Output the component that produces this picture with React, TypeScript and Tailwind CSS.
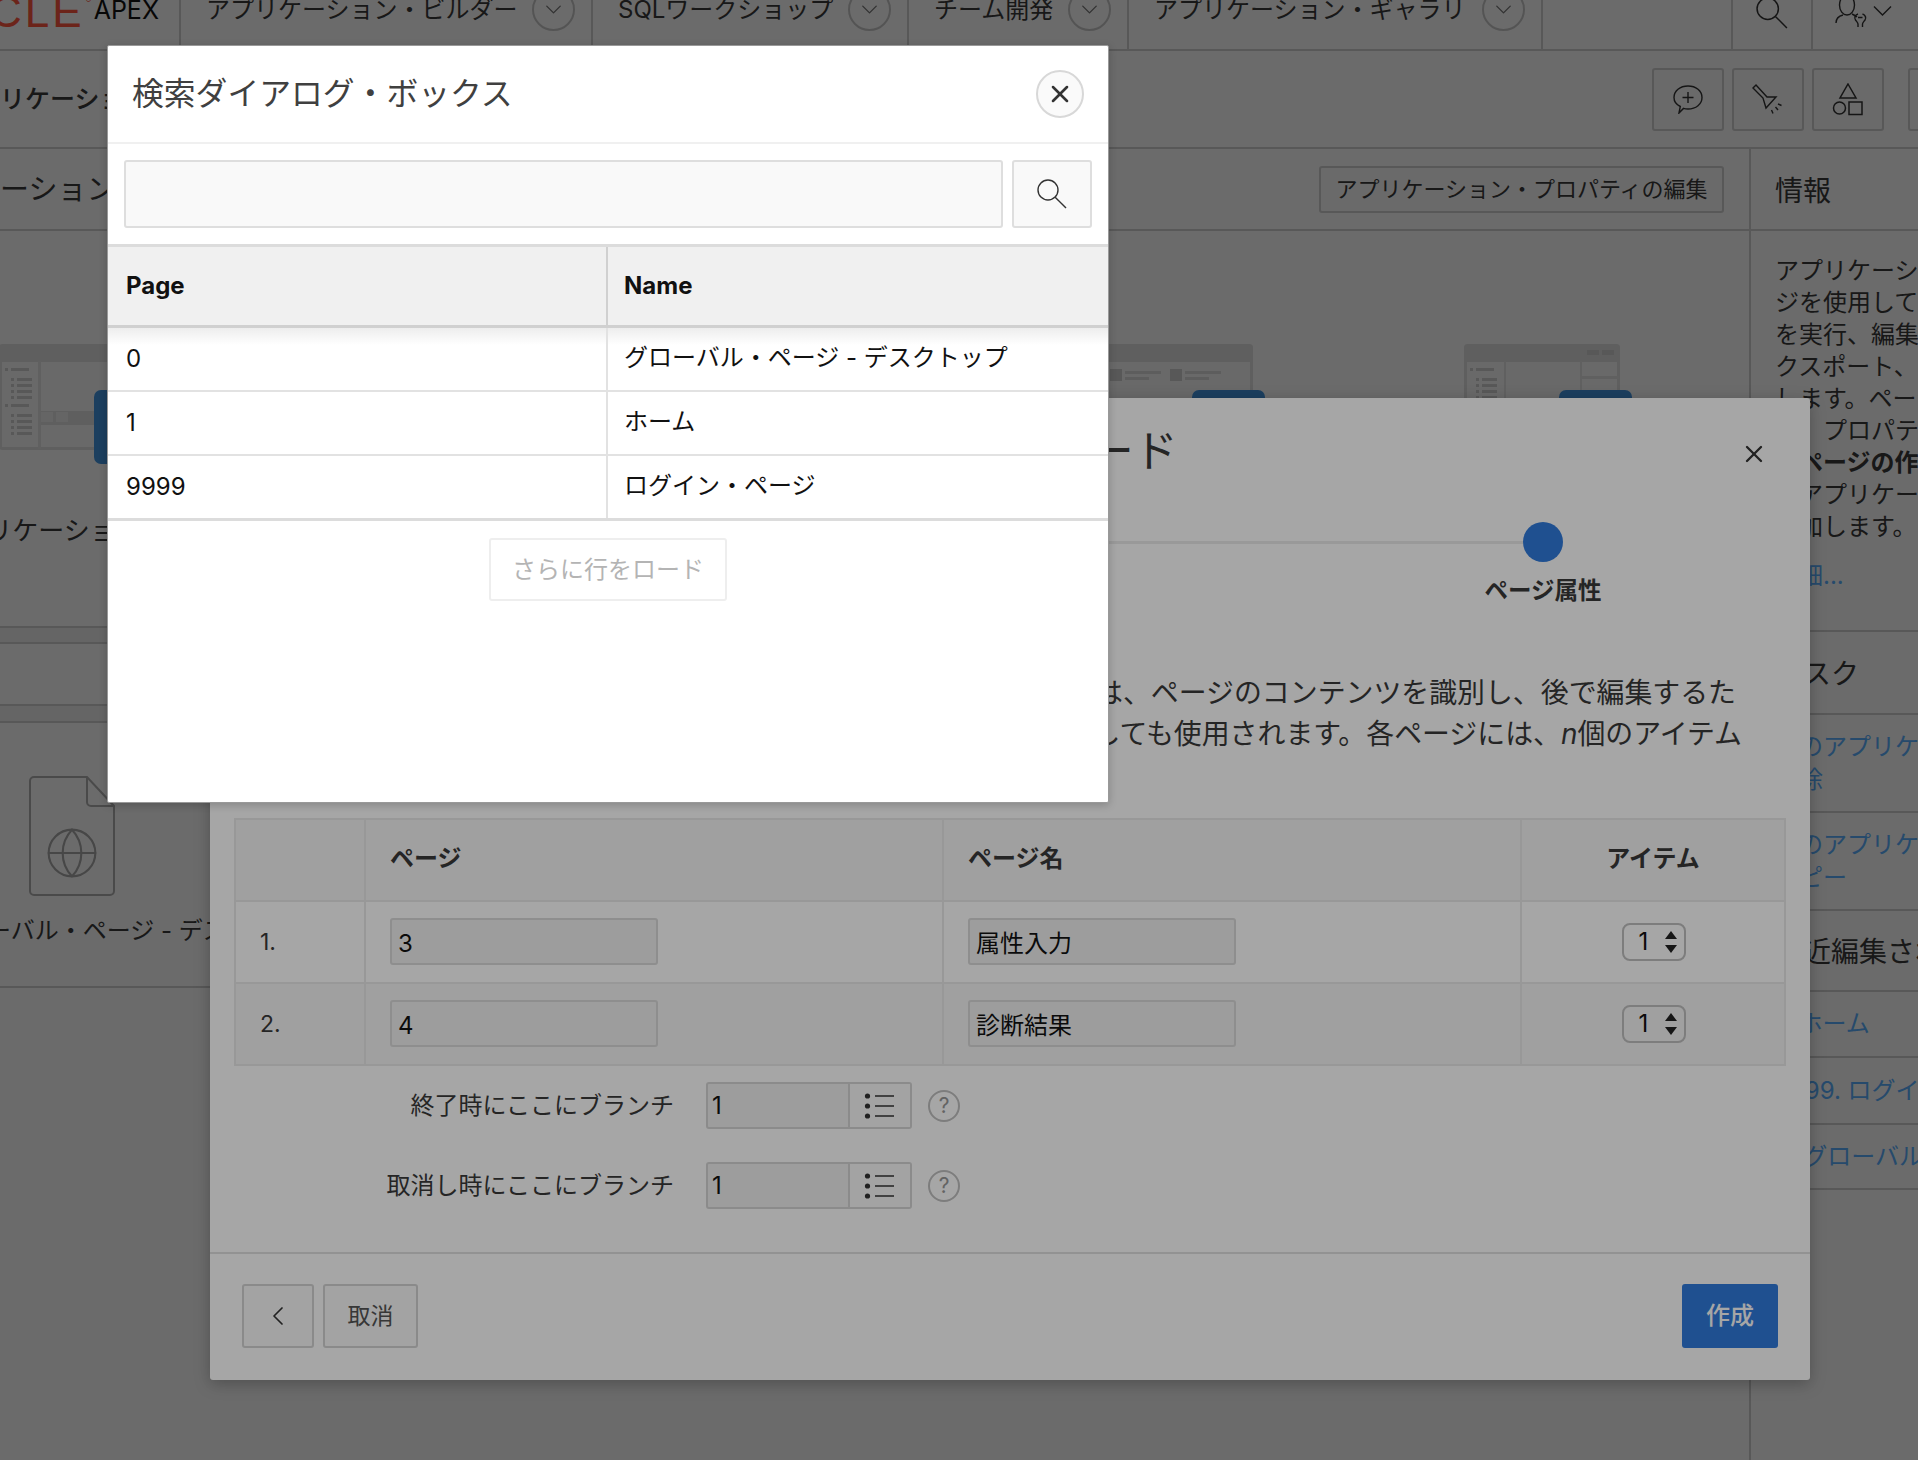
import React from "react";
import { Globe, X, ChevronDown, ChevronLeft } from "lucide-react";

function SearchIcon({ size }: { size: number }) {
  return (
    <svg width={size} height={size} viewBox="0 0 30 30" fill="none" stroke="#333" strokeWidth="1.4">
      <circle cx="11" cy="11" r="10" />
      <path d="M18.2 18.2L29 29" />
    </svg>
  );
}

// thumbnail drawn in the page cards
function Thumb({ kind }: { kind: number }) {
  const list = [34, 40, 46, 52];
  const list2 = [70, 76, 82, 88];
  return (
    <svg width="156" height="106" viewBox="0 0 156 106" fill="none">
      <rect x="1.5" y="1.5" width="153" height="103" rx="2" fill="#f8f8f8" stroke="#e0e0e0" strokeWidth="3" />
      <rect x="1" y="1" width="154" height="17" fill="#e0e0e0" />
      {kind === 0 && (
        <g fill="#d0d0d0">
          <rect x="39" y="17" width="3" height="88" fill="#e4e4e4" />
          <rect x="42" y="67" width="113" height="14" fill="#e2e2e2" />
          <rect x="42" y="68" width="12" height="10" fill="#f0f0f0" />
          <rect x="57" y="68" width="12" height="10" fill="#f0f0f0" />
          <rect x="6" y="24" width="3" height="3" />
          <rect x="12" y="24" width="18" height="3" />
          <rect x="6" y="60" width="3" height="3" />
          <rect x="12" y="60" width="18" height="3" />
          {[...list, ...list2].map((y) => (
            <g key={y}>
              <rect x="12" y={y} width="3" height="3" />
              <rect x="18" y={y} width="15" height="3" />
            </g>
          ))}
        </g>
      )}
      {kind === 1 && (
        <g fill="#dcdcdc">
          {[13, 73].map((x) => (
            <g key={x}>
              <rect x={x} y="25" width="12" height="12" fill="#cfcfcf" />
              <rect x={x + 15} y="27" width="36" height="3" />
              <rect x={x + 15} y="33" width="24" height="3" />
            </g>
          ))}
        </g>
      )}
      {kind === 2 && (
        <g fill="#d0d0d0">
          <rect x="123" y="6" width="12" height="5" />
          <rect x="138" y="6" width="12" height="5" />
          <rect x="40" y="17" width="2" height="88" fill="#e4e4e4" />
          <rect x="116" y="17" width="2" height="88" fill="#e4e4e4" />
          <rect x="118" y="32" width="37" height="3" fill="#e4e4e4" />
          <rect x="6" y="24" width="3" height="3" />
          <rect x="12" y="24" width="18" height="3" />
          {list.map((y) => (
            <g key={y}>
              <rect x="12" y={y} width="3" height="3" />
              <rect x="18" y={y} width="15" height="3" />
            </g>
          ))}
        </g>
      )}
    </svg>
  );
}

function Card({ title, kind, first }: { title: string; kind: number; first?: boolean }) {
  return (
    <div className={first ? "w-[360px] shrink-0 flex flex-col items-center" : "w-[367px] shrink-0 flex flex-col items-center"}>
      <div className="relative h-[106px] w-[156px]">
        <Thumb kind={kind} />
        <div className="absolute left-[95px] top-[46px] h-[74px] w-[73px] rounded-[7px] bg-[#4396e2]" />
      </div>
      <div className="mt-[63px] text-[26px] leading-[36px] text-[#3a3a3a] whitespace-nowrap">{title}</div>
    </div>
  );
}

function NavItem({ label, w }: { label: string; w: number }) {
  return (
    <div
      className="flex items-center justify-between border-r-2 border-[#d0d0d0] pl-[25px] pr-[16px] shrink-0"
      style={{ width: w }}
    >
      <span className="text-[24px] text-[#3a3a3a] whitespace-nowrap">{label}</span>
      <span className="flex h-[43px] w-[43px] items-center justify-center rounded-full border-2 border-[#c8c8c8]">
        <ChevronDown size={27} strokeWidth={1.2} className="text-[#777]" />
      </span>
    </div>
  );
}

function ToolButton({ children, extra }: { children?: React.ReactNode; extra?: boolean }) {
  return (
    <div
      className={
        extra
          ? "ml-[16px] flex h-[63px] w-[72px] shrink-0 items-center justify-center rounded-[3px] border-2 border-[#d0d0d0] bg-[#fafafa]"
          : "flex h-[63px] w-[72px] shrink-0 items-center justify-center rounded-[3px] border-2 border-[#d0d0d0] bg-[#fafafa]"
      }
    >
      {children}
    </div>
  );
}

function BranchRow({ label }: { label: string }) {
  return (
    <div className="flex items-center">
      <div className="w-[464px] text-right text-[24px] text-[#3a3a3a] whitespace-nowrap">{label}</div>
      <div className="ml-[32px] flex h-[47px] w-[206px] rounded-[3px] border-2 border-[#d6d6d6] bg-[#f2f2f2]">
        <div className="flex-1 pl-[4px] text-[24px] leading-[44px] text-[#111]">1</div>
        <div className="flex w-[62px] items-center justify-center border-l-2 border-[#d6d6d6] bg-[#fafafa]">
          <svg width="32" height="28" viewBox="0 0 32 28" fill="none" stroke="#333">
            <circle cx="3.5" cy="4" r="2.6" fill="#333" stroke="none" />
            <circle cx="3.5" cy="14" r="2.6" fill="#333" stroke="none" />
            <circle cx="3.5" cy="24" r="2.6" fill="#333" stroke="none" />
            <path d="M11 4h19M11 14h19M11 24h19" strokeWidth="1.6" />
          </svg>
        </div>
      </div>
      <div className="ml-[16px] flex h-[32px] w-[32px] items-center justify-center rounded-full border-2 border-[#c0c0c0] text-[21px] leading-none text-[#999]">
        ?
      </div>
    </div>
  );
}

function WizardRow({ n, page, name, even }: { n: string; page: string; name: string; even?: boolean }) {
  return (
    <tr className={even ? "h-[82px] bg-[#f6f6f6]" : "h-[82px]"}>
      <td className="border-2 border-[#eaeaea] pl-[24px] text-[23px] text-[#3a3a3a]">{n}</td>
      <td className="border-2 border-[#eaeaea] pb-[2px] pl-[24px]">
        <div className="h-[47px] w-[268px] rounded-[3px] border-2 border-[#dadada] bg-[#f2f2f2] pl-[6px] text-[24px] leading-[47px] text-[#111]">
          {page}
        </div>
      </td>
      <td className="border-2 border-[#eaeaea] pb-[2px] pl-[24px]">
        <div className="h-[47px] w-[268px] rounded-[3px] border-2 border-[#dadada] bg-[#f2f2f2] pl-[6px] text-[24px] leading-[47px] text-[#111]">
          {name}
        </div>
      </td>
      <td className="border-2 border-[#eaeaea] pb-[1px] pl-[1px]">
        <div className="mx-auto flex h-[38px] w-[64px] items-center justify-between rounded-[8px] border-2 border-[#c0c0c0] pl-[15px] pr-[6px] text-[24px] text-[#111]">
          1
          <svg width="14" height="28" viewBox="0 0 14 28" fill="#222">
            <path d="M7 3l6 8H1zM7 25l6-8H1z" />
          </svg>
        </div>
      </td>
    </tr>
  );
}

const asideLines = [
  "アプリケーション・ビルダーのページ",
  "ジを使用してアプリケーション",
  "を実行、編集、インポート、エ",
  "クスポート、コピーおよび削除",
  "します。ページの作成",
  "等、プロパティの編集",
];

const labelCls = "text-[28px] text-[#3a3a3a] whitespace-nowrap";

export default function App() {
  return (
    <div className="relative h-[1460px] w-[1918px] overflow-hidden bg-[#fdfdfd] font-['Inter','Noto_Sans_CJK_JP',sans-serif]">
      {/* Page behind the dialogs */}
      <header className="-mt-[30px] flex h-[81px] border-b-2 border-[#d0d0d0]">
        <div className="flex w-[181px] shrink-0 items-center border-r-2 border-[#d0d0d0] overflow-hidden">
          <span className="ml-[-10px] mt-[4px] text-[44px] tracking-[3px] text-[#ff563e] font-['Liberation_Sans',sans-serif]">CLE</span>
          <span className="mb-[20px] ml-[1px] text-[9px] text-[#ff563e]">®</span>
          <span className="ml-[2px] mt-[3px] text-[25px] text-[#111]">APEX</span>
        </div>
        <NavItem label="アプリケーション・ビルダー" w={412} />
        <NavItem label="SQLワークショップ" w={316} />
        <NavItem label="チーム開発" w={220} />
        <NavItem label="アプリケーション・ギャラリ" w={414} />
        <div className="w-[190px] shrink-0 border-r-2 border-[#d0d0d0]" />
        <div className="w-[80px] shrink-0 border-r-2 border-[#d0d0d0] flex items-center justify-center pt-[7px]">
          <SearchIcon size={32} />
        </div>
        <div className="flex flex-1 items-center pl-[21px]">
          <svg width="70" height="34" viewBox="0 0 70 34" fill="none" stroke="#333" strokeWidth="1.4">
            <ellipse cx="13" cy="12" rx="7.5" ry="10" />
            <path d="M2 30c0-5 3-7 7-8M18 21c2 1 4 2 5 3" />
            <path d="M24 21c-3 1-4 4-2.500 6s2.500 3 2.500 4v3M28.500 21c3 1 4 4 2.500 6s-2.500 3-2.500 4v3M24 24.500h4.500" />
            <path d="M40 13.500l8.500 8.500 8.500-8.500" />
          </svg>
        </div>
      </header>

      <div className="flex h-[98px] items-center justify-between border-b-2 border-[#d0d0d0]">
        <div className="ml-[-50px] mt-[2px] text-[25px] font-medium text-[#3a3a3a] whitespace-nowrap">アプリケーション 100</div>
        <div className="flex gap-[8px] mr-[-62px]">
          <ToolButton>
            <svg width="30" height="29" viewBox="0 0 30 29" fill="none" stroke="#333" strokeWidth="1.4">
              <path d="M6 28l1.300-6.500C3 19.500 1 16.500 1 12.500 1 6 7 1 15 1s14 5 14 11.500S23 24 15 24c-1.500 0-3-.2-4.500-.6L6 28z" />
              <path d="M15 7v11M9.500 12.500h11" />
            </svg>
          </ToolButton>
          <ToolButton>
            <svg width="32" height="31" viewBox="0 0 32 31" fill="none" stroke="#333" strokeWidth="1.4">
              <path d="M1 4l3-3 11 12h9L14 24l-3-10L1 4z" />
              <path d="M19.500 26l1.500 3.500M23.500 23l2.500 3M26 20l3.500 1.500" />
            </svg>
          </ToolButton>
          <ToolButton>
            <svg width="32" height="33" viewBox="0 0 32 33" fill="none" stroke="#333" strokeWidth="1.500">
              <path d="M16 1l8 14H8z" />
              <circle cx="7.500" cy="25" r="6" />
              <rect x="17" y="19" width="13" height="12.500" />
            </svg>
          </ToolButton>
          <ToolButton extra />
        </div>
      </div>

      <div className="flex">
        <main className="w-[1749px] shrink-0">
          <div className="flex h-[82px] items-center justify-between border-b-2 border-[#d0d0d0] pr-[25px]">
            <div className="ml-[-116px] mt-[1px] text-[29px] text-[#3a3a3a] whitespace-nowrap">アプリケーション</div>
            <div className="flex h-[47px] w-[405px] items-center justify-center rounded-[3px] border-2 border-[#d0d0d0] bg-[#fafafa] text-[22px] text-[#3a3a3a] whitespace-nowrap">
              アプリケーション・プロパティの編集
            </div>
          </div>
          <div className="-ml-[103px] flex h-[395px] pt-[113px]">
            <Card title="アプリケーションの実行" kind={0} first />
            <Card title="ページの作成" kind={0} />
            <Card title="コピー" kind={0} />
            <Card title="インポート" kind={1} />
            <Card title="エクスポート" kind={2} />
          </div>
          <div className="h-[18px] border-y-2 border-[#d0d0d0] bg-[#f0f0f0]" />
          <div className="h-[60px]" />
          <div className="h-[19px] border-y-2 border-[#d0d0d0] bg-[#f0f0f0]" />
          <div className="flex h-[265px] flex-col border-b-2 border-[#d0d0d0]">
            <div className="relative ml-[29px] mt-[53px] h-[120px] w-[86px]">
              <svg width="86" height="120" viewBox="0 0 86 120" fill="none" stroke="#b0b0b0" strokeWidth="2">
                <path d="M58 1H5a4 4 0 0 0-4 4v110a4 4 0 0 0 4 4h76a4 4 0 0 0 4-4V30L58 1zM58 1v25a4 4 0 0 0 4 4h23" />
              </svg>
              <Globe size={56} strokeWidth={0.9} className="absolute left-[15px] top-[49px] text-[#a8a8a8]" />
            </div>
            <div className="ml-[-61px] mt-[17px] text-[24px] text-[#3a3a3a] whitespace-nowrap">グローバル・ページ - デスクトップ</div>
          </div>
        </main>

        <aside className="flex h-[1311px] w-[169px] shrink-0 flex-col overflow-hidden border-l-2 border-[#d0d0d0]">
          <div className={"flex h-[82px] shrink-0 items-center border-b-2 border-[#d0d0d0] pl-[24px] pt-[3px] " + labelCls}>情報</div>
          <div className="h-[401px] shrink-0 border-b-2 border-[#d0d0d0] pl-[24px] pt-[24px] text-[24px] leading-[32px] text-[#3a3a3a] whitespace-nowrap">
            {asideLines.map((l) => (
              <div key={l}>{l}</div>
            ))}
            <div className="font-bold">「ページの作成」</div>
            <div>はアプリケーション</div>
            <div>追加します。</div>
            <div className="mt-[17px] text-[#5bb0ff]">詳細...</div>
          </div>
          <div className={"flex h-[83px] shrink-0 items-center border-b-2 border-[#d0d0d0] pl-[24px] pt-[3px] " + labelCls}>タスク</div>
          <div className="h-[98px] shrink-0 border-b-2 border-[#d0d0d0] pl-[24px] pt-[15px] text-[24px] leading-[33px] text-[#5bb0ff] whitespace-nowrap">
            <div>このアプリケーション</div>
            <div>削除</div>
          </div>
          <div className="h-[98px] shrink-0 border-b-2 border-[#d0d0d0] pl-[24px] pt-[15px] text-[24px] leading-[33px] text-[#5bb0ff] whitespace-nowrap">
            <div>このアプリケーション</div>
            <div>コピー</div>
          </div>
          <div className={"flex h-[81px] shrink-0 items-center border-b-2 border-[#d0d0d0] pl-[24px] pt-[3px] " + labelCls}>最近編集されたページ</div>
          <div className="flex h-[66px] shrink-0 items-center border-b-2 border-[#d0d0d0] pl-[24px] text-[24px] text-[#5bb0ff] whitespace-nowrap">1. ホーム</div>
          <div className="flex h-[67px] shrink-0 items-center border-b-2 border-[#d0d0d0] pl-[24px] text-[24px] text-[#5bb0ff] whitespace-nowrap">9999. ログイン・ページ</div>
          <div className="flex h-[65px] shrink-0 items-center border-b-2 border-[#d0d0d0] pl-[24px] text-[24px] text-[#5bb0ff] whitespace-nowrap">0. グローバル・ページ</div>
        </aside>
      </div>

      <div className="absolute inset-0 bg-black/35" />

      {/* Wizard dialog */}
      <section className="absolute left-[210px] top-[398px] flex h-[982px] w-[1600px] flex-col rounded-[3px] bg-white shadow-[0_4px_16px_rgba(0,0,0,0.25)]">
        <div className="flex h-[106px] shrink-0 items-center justify-between pl-[46px] pr-[42px]">
          <h2 className="text-[44px] text-[#3a3a3a] whitespace-nowrap">ウィザード・フォームページの作成ウィザード</h2>
          <X size={28} strokeWidth={2} className="mt-[6px] text-[#333]" />
        </div>
        <div className="mt-[18px] flex items-center pr-[247px]">
          <div className="h-[3px] flex-1 bg-[#ececec]" />
          <div className="h-[40px] w-[40px] rounded-full bg-[#317cdd]" />
        </div>
        <div className="ml-auto mr-[187px] mt-[13px] w-[160px] text-center text-[23.500px] leading-[32px] font-bold text-[#3a3a3a] whitespace-nowrap">
          ページ属性
        </div>
        <div className="mt-[66px] text-[27.900px] leading-[41px] text-[#3a3a3a] whitespace-nowrap">
          <div className="flex justify-end pr-[74px]">各ページのタイトルは、ページのコンテンツを識別し、後で編集するた</div>
          <div className="flex justify-end pr-[68px]">
            <span>
              めのリンクとしても使用されます。各ページには、<i>n</i>個のアイテム
            </span>
          </div>
          <div className="pl-[25px]">を含めることができます。</div>
        </div>
        <table className="ml-[24px] mt-[22px] w-[1550px] table-fixed border-collapse">
          <colgroup>
            <col className="w-[130px]" />
            <col className="w-[578px]" />
            <col className="w-[578px]" />
            <col className="w-[264px]" />
          </colgroup>
          <thead>
            <tr className="h-[82px] bg-[#f6f6f6] text-[24px] font-bold text-[#3a3a3a]">
              <th className="border-2 border-[#eaeaea] pb-[3px]" />
              <th className="border-2 border-[#eaeaea] pb-[3px] pl-[24px] text-left">ページ</th>
              <th className="border-2 border-[#eaeaea] pb-[3px] pl-[24px] text-left">ページ名</th>
              <th className="border-2 border-[#eaeaea] pb-[3px] text-center">アイテム</th>
            </tr>
          </thead>
          <tbody>
            <WizardRow n="1." page="3" name="属性入力" />
            <WizardRow n="2." page="4" name="診断結果" even />
          </tbody>
        </table>
        <div className="mt-[16px] flex flex-col gap-[33px]">
          <BranchRow label="終了時にここにブランチ" />
          <BranchRow label="取消し時にここにブランチ" />
        </div>
        <div className="mt-auto flex h-[128px] justify-between border-t-2 border-[#e0e0e0] px-[32px] pt-[30px]">
          <div className="flex gap-[9px]">
            <div className="flex h-[64px] w-[72px] items-center justify-center rounded-[3px] border-2 border-[#d4d4d4] bg-[#fafafa]">
              <ChevronLeft size={32} strokeWidth={1.3} className="text-[#333]" />
            </div>
            <div className="flex h-[64px] w-[95px] items-center justify-center rounded-[3px] border-2 border-[#d4d4d4] bg-[#fafafa] text-[23px] text-[#555]">
              取消
            </div>
          </div>
          <div className="flex h-[64px] w-[96px] items-center justify-center rounded-[3px] bg-[#317cdd] text-[24px] font-medium text-white">
            作成
          </div>
        </div>
      </section>

      <div className="absolute inset-0 bg-black/35" />

      {/* Search dialog */}
      <section className="absolute left-[107px] top-[45px] flex h-[758px] w-[1002px] flex-col rounded-[2px] border border-[#999] bg-white shadow-[0_2px_8px_rgba(0,0,0,0.2)]">
        <div className="flex h-[98px] shrink-0 items-center justify-between border-b-2 border-[#f0f0f0] pl-[24px] pr-[24px]">
          <h1 className="text-[31.800px] text-[#404040] whitespace-nowrap">検索ダイアログ・ボックス</h1>
          <div className="flex h-[48px] w-[48px] items-center justify-center rounded-full border-2 border-[#d8d8d8] bg-[#fafafa]">
            <X size={28} strokeWidth={2.2} className="text-[#333]" />
          </div>
        </div>
        <div className="flex gap-[9px] pl-[16px] pt-[16px]">
          <div className="h-[68px] w-[879px] rounded-[3px] border-2 border-[#dedede] bg-[#f9f9f9]" />
          <div className="flex h-[68px] w-[80px] items-center justify-center rounded-[3px] border-2 border-[#dedede] bg-[#f9f9f9]">
            <SearchIcon size={30} />
          </div>
        </div>
        <table className="mt-[16px] w-[1000px] table-fixed border-collapse border-t-[3px] border-b-[3px] border-[#dcdcdc] text-[24px] text-[#111]">
          <colgroup>
            <col className="w-[499px]" />
            <col className="w-[501px]" />
          </colgroup>
          <thead>
            <tr className="h-[81px] bg-[#f0f0f0] font-bold">
              <th className="border-b-[3px] border-r-2 border-[#d0d0d0] pl-[18px] text-left">Page</th>
              <th className="border-b-[3px] border-[#d0d0d0] pl-[16px] text-left">Name</th>
            </tr>
          </thead>
          <tbody>
            <tr className="h-[64px] bg-[linear-gradient(#ececec,#ffffff_18px)]">
              <td className="border-b-2 border-r-2 border-[#e2e2e2] pl-[18px]">0</td>
              <td className="border-b-2 border-[#e2e2e2] pb-[2px] pl-[16px]">グローバル・ページ - デスクトップ</td>
            </tr>
            <tr className="h-[64px]">
              <td className="border-b-2 border-r-2 border-[#e2e2e2] pl-[18px]">1</td>
              <td className="border-b-2 border-[#e2e2e2] pb-[2px] pl-[16px]">ホーム</td>
            </tr>
            <tr className="h-[65px]">
              <td className="border-r-2 border-[#e2e2e2] pl-[18px]">9999</td>
              <td className="pb-[2px] pl-[16px]">ログイン・ページ</td>
            </tr>
          </tbody>
        </table>
        <div className="mt-[17px] flex justify-center">
          <div className="flex h-[63px] w-[238px] items-center justify-center rounded-[3px] border-2 border-[#eeeeee] text-[24px] text-[#b4b4b4]">
            さらに行をロード
          </div>
        </div>
      </section>
    </div>
  );
}
